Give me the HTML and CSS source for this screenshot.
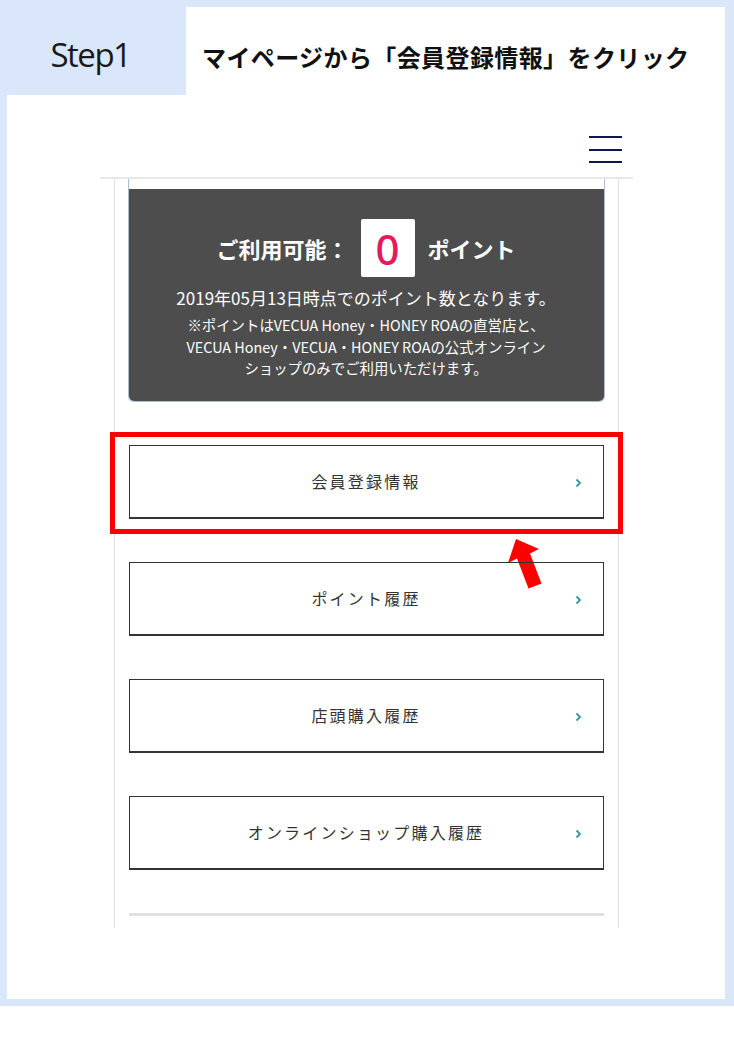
FILE: index.html
```html
<!DOCTYPE html>
<html lang="ja">
<head>
  <meta charset="UTF-8" />
  <title>Step1 マイページ</title>
  <link rel="stylesheet" href="styles.css">
</head>
<body>

<div class="frame">
  <!-- step heading -->
  <div class="step-row">
    <div class="step-label">Step1</div>
    <div class="step-title">マイページから「会員登録情報」をクリック</div>
  </div>

  <!-- phone screen -->
  <div class="phone">
    <header class="phone-header">
      <div class="hamburger">
        <span></span>
        <span></span>
        <span></span>
      </div>
    </header>

    <div class="phone-body">
      <div class="point-card">
        <div class="point-inner">
          <div class="point-row">
            <span class="point-label">ご利用可能：</span>
            <span class="point-box">0</span>
            <span class="point-unit">ポイント</span>
          </div>
          <p class="point-date">2019年05月13日時点でのポイント数となります。</p>
          <p class="point-note">※ポイントはVECUA Honey・HONEY ROAの直営店と、<br>VECUA Honey・VECUA・HONEY ROAの公式オンライン<br>ショップのみでご利用いただけます。</p>
        </div>
      </div>

      <ul class="menu">
        <li class="menu-item highlight">
          <a href="#">会員登録情報
            <svg class="chev" width="7" height="10" viewBox="0 0 7 10"><polyline points="1.5,1.5 5,5 1.5,8.5" /></svg>
          </a>
          <span class="mark"></span>
          <svg class="arrow" width="44" height="54" viewBox="0 0 44 54">
            <polygon points="15,2 38,12 29,16.4 40.5,46.4 27.5,51.6 16,21.6 7,26" />
          </svg>
        </li>
        <li class="menu-item">
          <a href="#">ポイント履歴
            <svg class="chev" width="7" height="10" viewBox="0 0 7 10"><polyline points="1.5,1.5 5,5 1.5,8.5" /></svg>
          </a>
        </li>
        <li class="menu-item">
          <a href="#">店頭購入履歴
            <svg class="chev" width="7" height="10" viewBox="0 0 7 10"><polyline points="1.5,1.5 5,5 1.5,8.5" /></svg>
          </a>
        </li>
        <li class="menu-item">
          <a href="#">オンラインショップ購入履歴
            <svg class="chev" width="7" height="10" viewBox="0 0 7 10"><polyline points="1.5,1.5 5,5 1.5,8.5" /></svg>
          </a>
        </li>
      </ul>

      <div class="divider"></div>
    </div>
  </div>
</div>

</body>
</html>
```

FILE: styles.css
```css
body {
  margin: 0;
  padding: 0;
  background: #fff;
  font-family: "Noto Sans CJK JP", "Noto Sans", sans-serif;
  color: #333;
}
.frame {
  width: 734px;
  height: 1006px;
  box-sizing: border-box;
  border: 7px solid #dae7fb;
  border-right-width: 9px;
  background: #fff;
}
.step-row {
  display: flex;
  height: 88px;
}
.step-label {
  width: 179px;
  background: #dae7fb;
  display: flex;
  align-items: center;
  justify-content: center;
  padding: 6px 12px 0 0;
  box-sizing: border-box;
  font-family: "Open Sans", "Lato", sans-serif;
  font-weight: 400;
  font-size: 33px;
  letter-spacing: -1.5px;
  color: #1a1a1a;
}
.step-title {
  display: flex;
  align-items: center;
  padding: 10px 0 0 16px;
  font-size: 24px;
  font-weight: bold;
  color: #111;
  letter-spacing: 0.4px;
}
.phone {
  width: 533px;
  margin: 0 auto;
}
.phone-header {
  height: 68px;
  border-bottom: 2px solid #e8e8e8;
  display: flex;
  justify-content: flex-end;
  align-items: flex-end;
  padding: 0 11px 14px 0;
}
.hamburger {
  width: 33px;
  display: flex;
  flex-direction: column;
  gap: 10.5px;
}
.hamburger span {
  display: block;
  height: 2px;
  background: #0c1a4d;
}
.phone-body {
  width: 475px;
  margin: 0 auto;
  padding: 0 14px 12px;
  border-left: 1px solid #e2e2e2;
  border-right: 1px solid #e2e2e2;
}
.point-card {
  border: 1px solid #a9bed3;
  border-top: none;
  border-radius: 0 0 6px 6px;
  padding-top: 10px;
  margin: 0 -1px;
  background: #fff;
}
.point-inner {
  background: #4d4d4d;
  border-radius: 0 0 5px 5px;
  color: #fff;
  text-align: center;
  padding: 30px 0 22px;
}
.point-row {
  display: flex;
  justify-content: center;
  align-items: center;
  font-size: 22px;
  font-weight: bold;
}
.point-box {
  width: 54px;
  height: 58px;
  background: #fff;
  border-radius: 2px;
  margin: 0 13px 0 12px;
  display: flex;
  align-items: center;
  justify-content: center;
  font-family: "Noto Sans", sans-serif;
  font-size: 42px;
  font-weight: 500;
  color: #e5195e;
}
.point-date {
  margin: 9px 0 0;
  font-size: 17px;
  line-height: 24px;
}
.point-note {
  margin: 4px 0 0;
  font-size: 14.4px;
  line-height: 21.5px;
}
.menu {
  list-style: none;
  margin: 43px 0 0;
  padding: 0;
  display: flex;
  flex-direction: column;
  gap: 43px;
}
.menu-item {
  position: relative;
}
.menu-item a {
  display: flex;
  align-items: center;
  justify-content: center;
  height: 74px;
  box-sizing: border-box;
  border: 1px solid #333;
  border-bottom-width: 2px;
  color: #333;
  text-decoration: none;
  font-size: 16px;
  letter-spacing: 2.2px;
  position: relative;
}
.chev {
  position: absolute;
  right: 21px;
  top: 32px;
}
.chev polyline {
  fill: none;
  stroke: #3597a3;
  stroke-width: 1.8;
}
.mark {
  position: absolute;
  top: -13px;
  left: -19px;
  right: -19px;
  bottom: -15px;
  border: 5px solid #ff0000;
}
.arrow {
  position: absolute;
  left: 372px;
  top: 92px;
}
.arrow polygon {
  fill: #ff0000;
}
.divider {
  height: 3px;
  background: #e0e0e0;
  margin-top: 43px;
}
```
